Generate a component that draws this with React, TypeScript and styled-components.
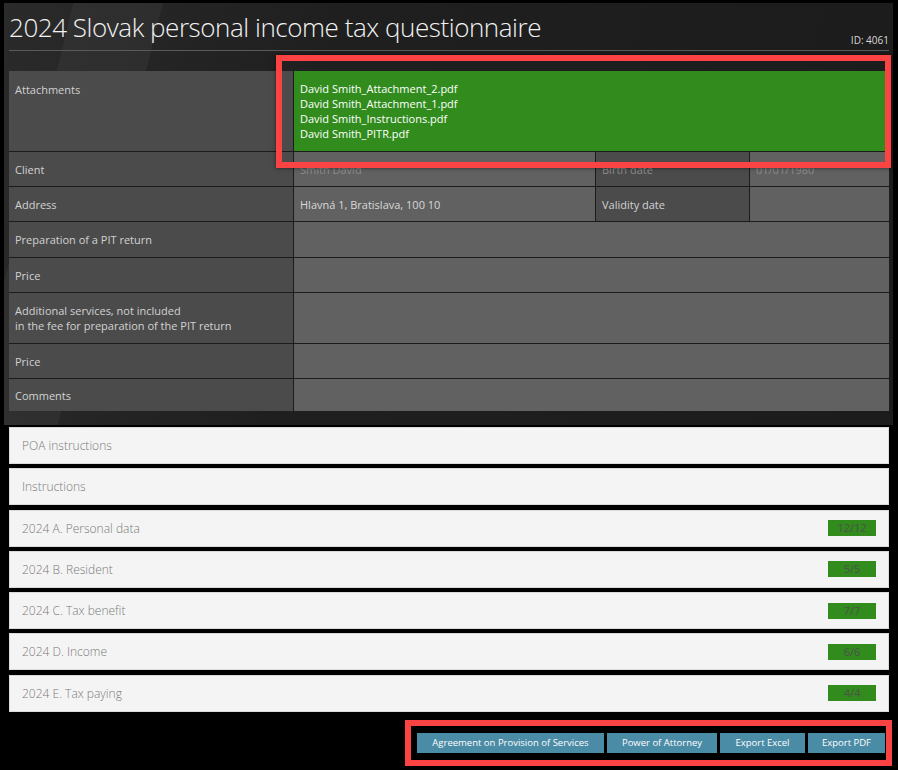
import React from 'react';
import styled, { createGlobalStyle } from 'styled-components';

const GlobalStyle = createGlobalStyle`
  html, body {
    margin: 0;
    padding: 0;
    background: #000;
  }
  body {
    font-family: "Open Sans", "Noto Sans", sans-serif;
  }
`;

type Row = {
  label: string;
  value?: string;
  dim?: boolean;
  extraLabel?: string;
  extraValue?: string;
  height: number;
};

const rows: Row[] = [
  { label: 'Client', value: 'Smith David', dim: true, extraLabel: 'Birth date', extraValue: '01/01/1980', height: 34 },
  { label: 'Address', value: 'Hlavná 1, Bratislava, 100 10', extraLabel: 'Validity date', extraValue: '', height: 34 },
  { label: 'Preparation of a PIT return', height: 35 },
  { label: 'Price', height: 34 },
  { label: 'Additional services, not included\nin the fee for preparation of the PIT return', height: 50 },
  { label: 'Price', height: 34 },
  { label: 'Comments', height: 32 },
];

const attachments = [
  'David Smith_Attachment_2.pdf',
  'David Smith_Attachment_1.pdf',
  'David Smith_Instructions.pdf',
  'David Smith_PITR.pdf',
];

const sections = [
  { title: 'POA instructions' },
  { title: 'Instructions' },
  { title: '2024 A. Personal data', done: '12/12' },
  { title: '2024 B. Resident', done: '5/5' },
  { title: '2024 C. Tax benefit', done: '7/7' },
  { title: '2024 D. Income', done: '6/6' },
  { title: '2024 E. Tax paying', done: '4/4' },
];

const buttons = [
  { label: 'Agreement on Provision of Services', width: 187 },
  { label: 'Power of Attorney', width: 110 },
  { label: 'Export Excel', width: 85 },
  { label: 'Export PDF', width: 77 },
];

export default function App() {
  return (
    <Page>
      <GlobalStyle />
      <Panel>
        <Header>
          <Title>2024 Slovak personal income tax questionnaire</Title>
          <RecordId>ID: 4061</RecordId>
        </Header>
        <Table>
          <LabelCell $top style={{ height: 80 }}>Attachments</LabelCell>
          <FilesCell>
            {attachments.map((f) => (
              <FileLink key={f}>{f}</FileLink>
            ))}
          </FilesCell>
          {rows.map((r, i) => (
            <React.Fragment key={i}>
              <LabelCell style={{ height: r.height }}>{r.label}</LabelCell>
              {r.extraLabel !== undefined ? (
                <>
                  <ValueCell $dim={r.dim}>{r.value}</ValueCell>
                  <LabelCell $dim={r.dim}>{r.extraLabel}</LabelCell>
                  <ValueCell $dim={r.dim}>{r.extraValue}</ValueCell>
                </>
              ) : (
                <ValueCell $span>{r.value}</ValueCell>
              )}
            </React.Fragment>
          ))}
        </Table>
      </Panel>
      <Sections>
        {sections.map((s) => (
          <Section key={s.title}>
            <SectionTitle>{s.title}</SectionTitle>
            {s.done && <Progress>{s.done}</Progress>}
          </Section>
        ))}
      </Sections>
      <Actions>
        {buttons.map((b) => (
          <ActionButton key={b.label} style={{ width: b.width }}>
            {b.label}
          </ActionButton>
        ))}
      </Actions>
      <Highlight style={{ left: 276, top: 55, width: 615, height: 113 }} />
      <Highlight style={{ left: 405, top: 720, width: 487, height: 46 }} />
    </Page>
  );
}

const Page = styled.div`
  position: relative;
  width: 898px;
  min-height: 770px;
  box-sizing: border-box;
  padding-top: 3px;
  background: #000;
`;

const Panel = styled.div`
  margin: 0 5px 0 4px;
  padding: 0 4px 14px 5px;
  background:
    linear-gradient(104deg, transparent 0 7%, rgba(255, 255, 255, 0.04) 7% 16%, transparent 16% 100%),
    linear-gradient(100deg, #2a2a2a 0%, #1f1f1f 35%, #1c1c1c 100%);
`;

const Header = styled.div`
  display: flex;
  align-items: flex-end;
  justify-content: space-between;
  height: 47px;
  border-bottom: 1px solid #5a5a5a;
  margin-bottom: 20px;
`;

const Title = styled.h1`
  margin: 0 0 8px 0;
  font-family: "Open Sans", sans-serif;
  font-weight: 300;
  font-size: 26px;
  line-height: 30px;
  color: #f2f2f2;
  letter-spacing: -0.45px;
`;

const RecordId = styled.span`
  margin-bottom: 3px;
  font-size: 10px;
  color: #d8d8d8;
`;

const Table = styled.div`
  display: grid;
  grid-template-columns: 284px 301px 153px 1fr;
  gap: 1px;
  background: #1b1b1b;
`;

const LabelCell = styled.div<{ $top?: boolean; $dim?: boolean }>`
  display: flex;
  align-items: ${({ $top }) => ($top ? 'flex-start' : 'center')};
  box-sizing: border-box;
  padding: ${({ $top }) => ($top ? '11px 6px 0' : '0 6px')};
  background: #4b4b4b;
  color: ${({ $dim }) => ($dim ? '#8e8e8e' : '#d2d2d2')};
  font-size: 11px;
  line-height: 15px;
  white-space: pre-line;
`;

const ValueCell = styled.div<{ $span?: boolean; $dim?: boolean }>`
  display: flex;
  align-items: center;
  grid-column: ${({ $span }) => ($span ? '2 / 5' : 'auto')};
  padding: 0 6px;
  background: #616161;
  color: ${({ $dim }) => ($dim ? '#8e8e8e' : '#d8d8d8')};
  font-size: 11px;
  line-height: 15px;
`;

const FilesCell = styled.div`
  grid-column: 2 / 5;
  display: flex;
  flex-direction: column;
  justify-content: center;
  padding: 0 6px;
  background: #318c1d;
`;

const FileLink = styled.span`
  color: #fff;
  font-size: 11px;
  line-height: 15px;
`;

const Sections = styled.div`
  display: flex;
  flex-direction: column;
  gap: 4.3px;
  margin-top: 2px;
  padding: 0 9px;
`;

const Section = styled.div`
  display: flex;
  align-items: center;
  justify-content: space-between;
  height: 37px;
  box-sizing: border-box;
  padding: 0 12px 0 12px;
  background: #f4f4f4;
  border: 1px solid #dadada;
`;

const SectionTitle = styled.span`
  color: #7a7a7a;
  font-size: 12px;
  font-weight: 300;
`;

const Progress = styled.span`
  width: 48px;
  height: 16px;
  background: #318c1d;
  color: #4f4f4f;
  font-size: 11px;
  line-height: 16px;
  text-align: center;
`;

const Actions = styled.div`
  display: flex;
  justify-content: flex-end;
  gap: 3px;
  margin-top: 21px;
  padding-right: 13px;
`;

const ActionButton = styled.button`
  height: 20px;
  padding: 0;
  border: none;
  background: #4a8ba6;
  color: #fff;
  font-family: "Open Sans", sans-serif;
  font-size: 9.5px;
  white-space: nowrap;
`;

const Highlight = styled.div`
  position: absolute;
  box-sizing: border-box;
  border: 6px solid #fc4343;
  box-shadow: 0 0 4px rgba(0, 0, 0, 0.6);
  pointer-events: none;
`;
